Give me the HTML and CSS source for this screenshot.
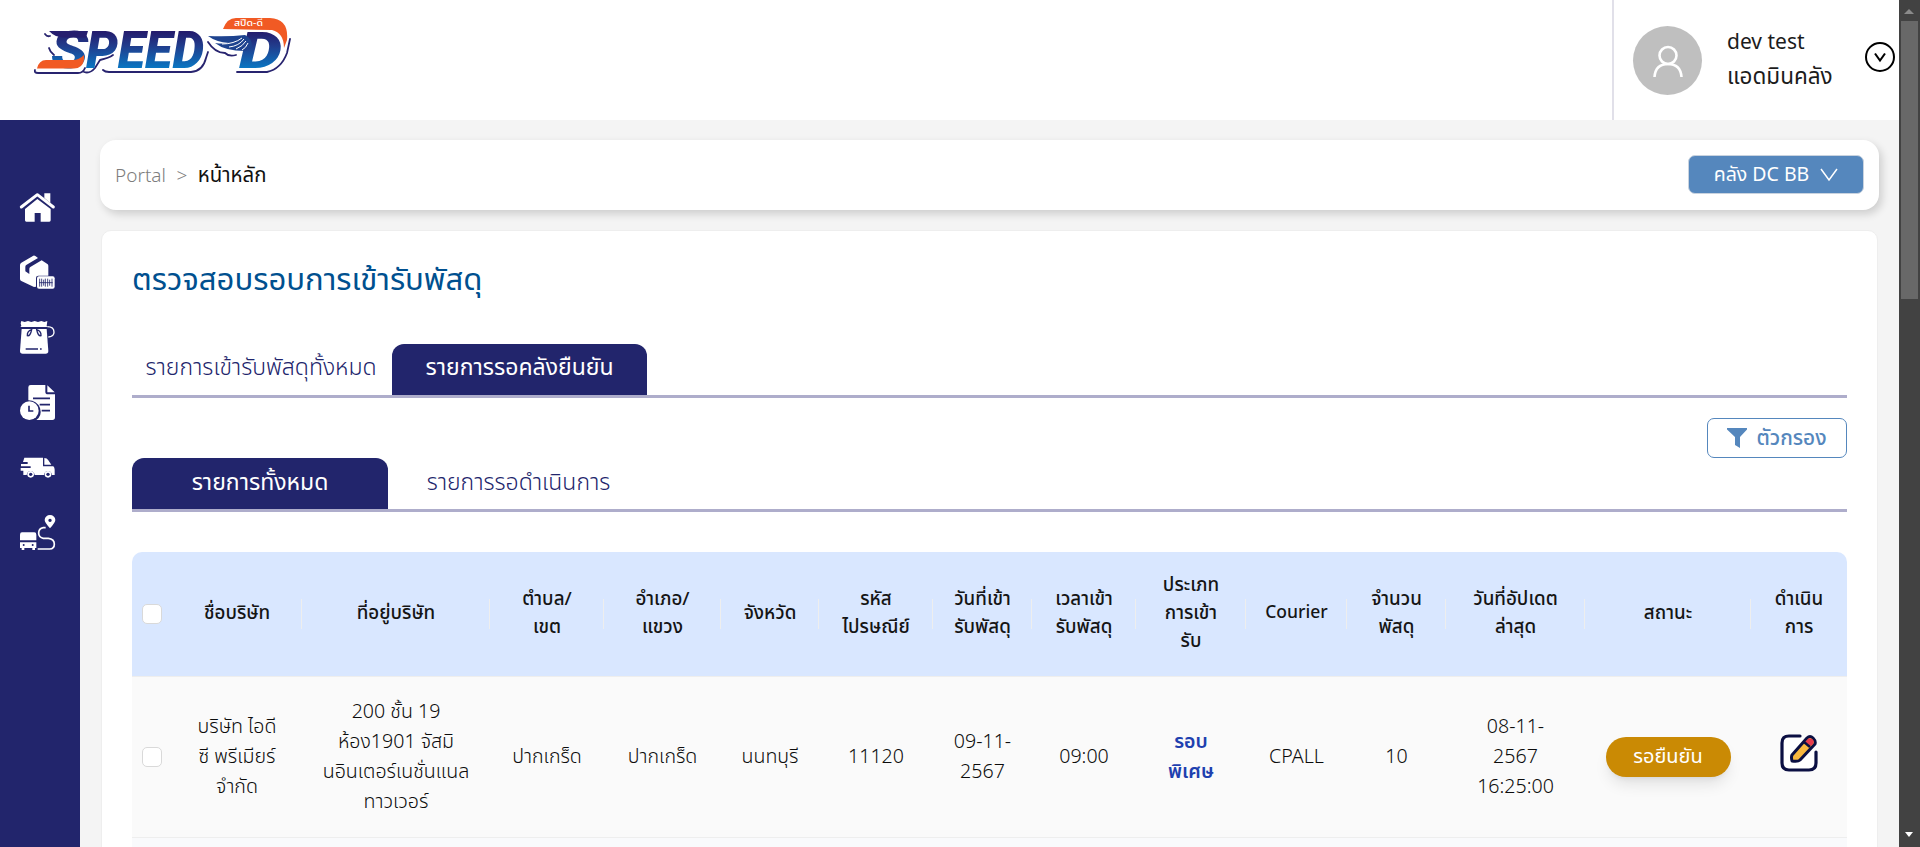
FILE: index.html
```html
<!DOCTYPE html>
<html lang="th">
<head>
<meta charset="utf-8">
<title>SPEED-D</title>
<link rel="stylesheet" href="styles.css">
</head>
<body>
<div class="window">
  <div class="app">
    <header class="topbar">
      <svg class="logo" width="300" height="90" viewBox="0 0 300 90">
        <defs>
          <linearGradient id="blue" x1="0" y1="31" x2="0" y2="68" gradientUnits="userSpaceOnUse">
            <stop offset="0" stop-color="#241a6b"/><stop offset=".4" stop-color="#213c8c"/><stop offset="1" stop-color="#0a76c2"/>
          </linearGradient>
        </defs>
        <g fill="none" stroke="#28246f" stroke-width="1.8" stroke-linecap="round">
          <path d="M35 70q-1 3 3 3H78q5 0 7-5M84 72q6 2 11-4l5-8q9-2 13-5M103 70q2 2 6 2h82q12-1 15-14l2-6M45 34q2 3 5 2M49 48q1 4 5 7M208 42q7 11 17 11q4 4 11 2M237 72h30q14-3 20-19l3-14"/>
        </g>
        <text class="logo-word" y="67.500" fill="url(#blue)"><tspan x="51" textLength="37" lengthAdjust="spacingAndGlyphs">S</tspan><tspan x="86" textLength="118" lengthAdjust="spacingAndGlyphs">PEED</tspan></text>
        <path d="M49 31h39l-2 6.500H64q-9 0-15-6.500z" fill="#261e6f"/>
        <path d="M37 68.500q2-8.500 9-8.500h27q6 0 11-5q1 7-3 11-3 2.500-7 2.500z" fill="#f15a24"/>
        <text class="logo-d" x="239" y="67.500" textLength="43" lengthAdjust="spacingAndGlyphs" fill="url(#blue)">D</text>
        <path d="M223 29q4-11 13-11h34q19 1 17 22l-3 8q0-15-12-18z" fill="#f15a24"/>
        <path d="M208 36q20 1 37-1q7 3 7 12l-7 4q-20 0-30-8q8 1 14 0q-13-1-21-7z" fill="#1e438f"/>
        <path d="M222 44q12 0 20-6M229 47q10-1 15-8M236 49q7-3 10-8M242 50q4-2 6-7" stroke="#fff" stroke-width="1" fill="none"/>
        <text class="logo-thai" x="234" y="26" textLength="29" lengthAdjust="spacingAndGlyphs">สปีด-ดี</text>
      </svg>
      <div class="user">
        <div class="avatar">
          <svg width="34" height="34" viewBox="0 0 34 34" fill="none" stroke="#fff" stroke-width="2.6"><circle cx="17" cy="11.5" r="8.5"/><path d="M3.5 33q1-13 13.500-13T30.500 33"/></svg>
        </div>
        <div class="who"><span>dev test</span><span class="role">แอดมินคลัง</span></div>
        <svg class="more" width="30" height="30" viewBox="0 0 30 30" fill="none" stroke="#000" stroke-width="2"><circle cx="15" cy="15" r="14"/><path d="M10 11.500l5 7 5-7" stroke-width="2.100"/></svg>
      </div>
    </header>
    <div class="body">
      <nav class="side">
        <svg viewBox="0 0 105 105"><path d="M73 10h18v29l-18-15z"/><path d="M4 51L52 14l48 37" fill="none" stroke="#fff" stroke-width="9" stroke-linecap="round" stroke-linejoin="round"/><path d="M52 27l40 30v34q0 4-4 4H62V69H44v26H19q-4 0-4-4V57z"/></svg>
        <svg viewBox="0 0 105 105"><path d="M0 30q0-5 4-7L40 2q3-1 6 1l8 6-34 20q-4 2-4 6v14l12 8V41q0-3 3-5l34-20 16 10q4 2 4 6v30H55q-7 0-7 7v26l-6 1L4 78q-4-2-4-6z"/><rect x="51" y="64" width="53" height="37" rx="6"/><path d="M59 71v24M65 71v24M71 74v18M76 71v24M83 71v24M89 74v18M96 71v24M57 83h41" stroke="#22256c" stroke-width="2.500"/></svg>
        <svg viewBox="0 0 105 105"><path d="M4 3l10 3 10-3 10 3 10-3 10 3 10-3 9 3 9-3-2 15 3 3H1l3-3-2-8z"/><path d="M5 27h75l5 66q0 8-8 8H8q-8 0-8-8z"/><path d="M82 20q20 0 20 17 0 13-17 14" fill="none" stroke="#fff" stroke-width="4"/><path d="M35 29q-14 4-13 18 9 2 13-18zm15 0q14 4 13 18-9 2-13-18zM17 87h37M60 87h5" stroke="#22256c" stroke-width="4" fill="none"/></svg>
        <svg viewBox="0 0 105 105"><path d="M32 0h44v20q0 8 8 8h21v69q0 8-8 8H49Q67 92 60 69 50 46 25 46V7q0-7 7-7zM82 1l22 21H82z"/><circle cx="28" cy="77" r="28"/><path d="M27 62v16h13" fill="none" stroke="#22256c" stroke-width="5"/><path d="M39 40h51M59 59h31M65 77h25" stroke="#22256c" stroke-width="5"/></svg>
        <svg viewBox="0 0 105 105"><path d="M13 23h56v26h31q4 4 4 10v16H96q-2-12-12-12T72 75H44q-2-12-12-12T20 75H10V62H2v-8h30v-5H3v-7h20v-6H9zM73 24q8 0 12 7l9 13H73z"/><circle cx="32" cy="73" r="10"/><circle cx="84" cy="73" r="10"/><g fill="#22256c"><circle cx="32" cy="73" r="5"/><circle cx="84" cy="73" r="5"/></g></svg>
        <svg viewBox="0 0 105 105"><path d="M6 52h37q6 0 6 7v17H0V59q0-7 6-7zM0 82h49v17h-4v6h-8v-6H13v6H5v-6H0z"/><g fill="#22256c"><circle cx="11" cy="90" r="3"/><circle cx="38" cy="90" r="3"/></g><path fill-rule="evenodd" d="M90 40Q74 22 74 15a16 15 0 0 1 32 0q0 7-16 25zM90 11a5 5 0 1 0 .1 0z"/><path d="M77 38H70Q56 41 56 54t14 16h15q18 2 18 17t-14 15H53" fill="none" stroke="#fff" stroke-width="5"/></svg>
      </nav>
      <main class="content">
        <div class="crumbs">
          <div class="trail"><span>Portal</span><span class="sep">&gt;</span><b class="here">หน้าหลัก</b></div>
          <button class="dc"><span>คลัง DC BB</span><svg width="18" height="14" viewBox="0 0 18 14" fill="none" stroke="#fff" stroke-width="1.500"><path d="M1 1l8 11 8-11"/></svg></button>
        </div>
        <section class="panel">
          <h1>ตรวจสอบรอบการเข้ารับพัสดุ</h1>
          <div class="tabs first"><div class="tab wide">รายการเข้ารับพัสดุทั้งหมด</div><div class="tab on">รายการรอคลังยืนยัน</div></div>
          <button class="filter"><svg width="20" height="20" viewBox="0 0 20 20"><path d="M0 0h20v1.500L13 9v11l-5-3V9L0 1.500z"/></svg><span>ตัวกรอง</span></button>
          <div class="tabs second"><div class="tab on">รายการทั้งหมด</div><div class="tab">รายการรอดำเนินการ</div></div>
          <table>
            <colgroup><col class="c1"><col class="c2"><col class="c3"><col class="c4"><col class="c5"><col class="c6"><col class="c7"><col class="c8"><col class="c9"><col class="c10"><col class="c11"><col class="c12"><col class="c13"><col class="c14"><col class="c15"></colgroup>
            <thead><tr>
              <th><i class="box"></i></th><th>ชื่อบริษัท</th><th>ที่อยู่บริษัท</th><th>ตำบล/<br>เขต</th><th>อำเภอ/<br>แขวง</th><th>จังหวัด</th><th>รหัส<br>ไปรษณีย์</th><th>วันที่เข้า<br>รับพัสดุ</th><th>เวลาเข้า<br>รับพัสดุ</th><th>ประเภท<br>การเข้า<br>รับ</th><th class="latin">Courier</th><th>จำนวน<br>พัสดุ</th><th>วันที่อัปเดต<br>ล่าสุด</th><th>สถานะ</th><th>ดำเนิน<br>การ</th>
            </tr></thead>
            <tbody>
              <tr>
                <td><i class="box"></i></td><td>บริษัท ไอดี<br>ซี พรีเมียร์<br>จำกัด</td><td>200 ชั้น 19<br>ห้อง1901 จัสมิ<br>นอินเตอร์เนชั่นแนล<br>ทาวเวอร์</td><td>ปากเกร็ด</td><td>ปากเกร็ด</td><td>นนทบุรี</td><td>11120</td><td>09-11-<br>2567</td><td>09:00</td><td class="kind">รอบ<br>พิเศษ</td><td>CPALL</td><td>10</td><td>08-11-<br>2567<br>16:25:00</td><td><span class="badge">รอยืนยัน</span></td>
                <td><svg class="edit" width="38" height="40" viewBox="0 0 38 40"><path d="M20 2H9Q2 2 2 9v20q0 7 7 7h20q7 0 7-7V18" fill="#fff" stroke="#0b0f42" stroke-width="3.200" stroke-linecap="round"/><path d="M12 21L27 4q3-3 6 0t2 6L20 26q-2 2-8 1-1-4 0-6z" fill="#f9b83e" stroke="#0b0f42" stroke-width="3" stroke-linejoin="round"/><path d="M27 6q2-3 5-1t1 5l-2 2-6-4z" fill="#e83b4d"/><path d="M24 8l6 5" stroke="#0b0f42" stroke-width="2.500"/></svg></td>
              </tr>
              <tr class="next"><td colspan="15"></td></tr>
            </tbody>
          </table>
        </section>
      </main>
    </div>
  </div>
  <div class="scroll"><i class="up"></i><div class="thumb"></div><i class="down"></i></div>
</div>
</body>
</html>
```
FILE: styles.css
```css
* { box-sizing: border-box; }
body { margin: 0; overflow: hidden; background: #f4f4f4; color: #1c1c1c; font-family: "Noto Sans Thai", "Noto Sans", sans-serif; font-size: 20px; }
button { font: inherit; margin: 0; }
.window { display: flex; width: 1920px; height: 847px; overflow: hidden; }
.app { flex: 1; min-width: 0; display: flex; flex-direction: column; }
.topbar { height: 120px; flex: none; background: #fff; display: flex; justify-content: space-between; }
.logo { display: block; }
.logo-word { font: italic 900 52px Roboto, sans-serif; }
.logo-d { font: italic 900 49px Roboto, sans-serif; }
.logo-thai { font-size: 9px; font-weight: 500; fill: #fff; }
.user { width: 287px; border-left: 2px solid #e1e0e9; display: flex; padding-left: 19px; }
.avatar { width: 69px; height: 69px; margin-top: 26px; border-radius: 50%; background: #bfbfbf; display: flex; align-items: center; justify-content: center; }
.who { width: 138px; margin: 26px 0 0 25px; display: flex; flex-direction: column; font-size: 21px; line-height: 34px; white-space: nowrap; }
.role { font-size: 22.5px; }
.more { margin-top: 42px; }
.body { flex: 1; min-height: 0; display: flex; }
.side { width: 80px; background: #22256c; padding: 70px 0 0 20px; display: flex; flex-direction: column; gap: 30px; }
.side svg { width: 35px; height: 35px; fill: #fff; flex: none; overflow: visible; }
.content { flex: 1; min-width: 0; padding: 20px 20px 0; }
.crumbs { height: 70px; border-radius: 16px; background: #fff; box-shadow: 3px 4px 8px rgba(0,0,0,.16); display: flex; align-items: center; justify-content: space-between; padding: 0 15px; }
.trail { display: flex; align-items: baseline; gap: 10.5px; color: #7d7d7d; font-size: 19px; font-weight: 300; }
.here { color: #111; font-size: 20.4px; font-weight: 375; }
.dc { width: 176px; height: 39px; border: 1px solid #c9d3df; border-radius: 7px; background: #5587bd; color: #fff; display: flex; align-items: center; justify-content: center; gap: 11px; white-space: nowrap; padding: 0; margin-top: -1px; font-size: 19.5px; }
.panel { margin: 20px 1px 0; height: 640px; border: 1px solid #eee; border-radius: 10px 10px 0 0; background: #fff; padding: 0 30px; }
h1 { margin: 0; padding-top: 25px; height: 113px; font-size: 31.1px; line-height: 49px; font-weight: 400; color: #00508f; white-space: nowrap; }
.tabs { display: flex; height: 54px; border-bottom: 3px solid #aeadcb; color: #22256c; font-size: 23px; font-weight: 350; }
.tab { width: 256px; padding-bottom: 3px; line-height: 48px; display: flex; align-items: center; justify-content: center; white-space: nowrap; }
.second .tab { padding-bottom: 1px; }
.tab:last-child:not(.on) { padding-left: 5px; }
.tab.wide { width: 260px; padding-right: 2px; }
.first .on { width: 255px; }
.on { background: #22256c; color: #fff; border-radius: 12px 12px 0 0; font-weight: 400; }
.filter { display: flex; align-items: center; justify-content: center; gap: 9px; width: 140px; height: 40px; margin: 20px 0 0 auto; border: 1px solid #5587bd; border-radius: 7px; background: #fff; color: #5587bd; font-size: 20.8px; font-weight: 500; padding: 0; }
.filter svg { fill: #5587bd; }
table { width: 1715px; margin-top: 40px; border-collapse: separate; border-spacing: 0; table-layout: fixed; text-align: center; white-space: nowrap; }
th, td { padding: 0; border-bottom: 1px solid #eee; vertical-align: middle; }
th { height: 125px; padding-bottom: 2px; background: #d9e7ff linear-gradient(#eee, #eee) no-repeat right 47px / 1px 30px; color: #151515; font-size: 18.8px; line-height: 28px; font-weight: 500; }
th.latin { font-size: 17.5px; }
th:first-child { padding-bottom: 0; border-radius: 10px 0 0 0; background-image: none; }
th:last-child { border-radius: 0 10px 0 0; background-image: none; }
td { height: 161px; background: #fafafa; color: #0c0c0c; font-size: 19.6px; line-height: 30px; font-weight: 350; }
.next td { height: 40px; background: #f9fafc; }
.c1 { width: 40px; } .c2 { width: 130px; } .c3 { width: 188px; } .c4 { width: 114px; } .c5 { width: 117px; } .c6 { width: 98px; } .c7 { width: 114px; } .c8 { width: 99px; } .c9 { width: 104px; } .c10 { width: 110px; } .c11 { width: 101px; } .c12 { width: 99px; } .c13 { width: 139px; } .c14 { width: 166px; } .c15 { width: 96px; }
.box { display: block; width: 20px; height: 20px; margin: 0 auto; border: 1px solid #d9d9d9; border-radius: 5px; background: #fff; }
.kind { color: #1e40af; font-weight: 600; }
.badge { display: flex; align-items: center; justify-content: center; width: 125px; height: 40px; margin: 0 auto; border-radius: 20px; background: #ca8a04; color: #fff; font-size: 20px; font-weight: 400; box-shadow: 0 10px 15px -3px rgba(0,0,0,.1), 0 4px 6px -4px rgba(0,0,0,.1); }
.edit { display: block; margin: -6px auto 0; }
.scroll { width: 21px; background: #424242; display: flex; flex-direction: column; align-items: center; padding: 9px 1px 10px 0; }
.up { border: 5px solid transparent; border-top: 0; border-bottom-color: #8a8a8a; margin-bottom: 7px; }
.thumb { width: 17px; height: 278px; background: #686868; }
.down { border: 4px solid transparent; border-bottom: 0; border-top: 5px solid #fff; margin-top: auto; }
```
